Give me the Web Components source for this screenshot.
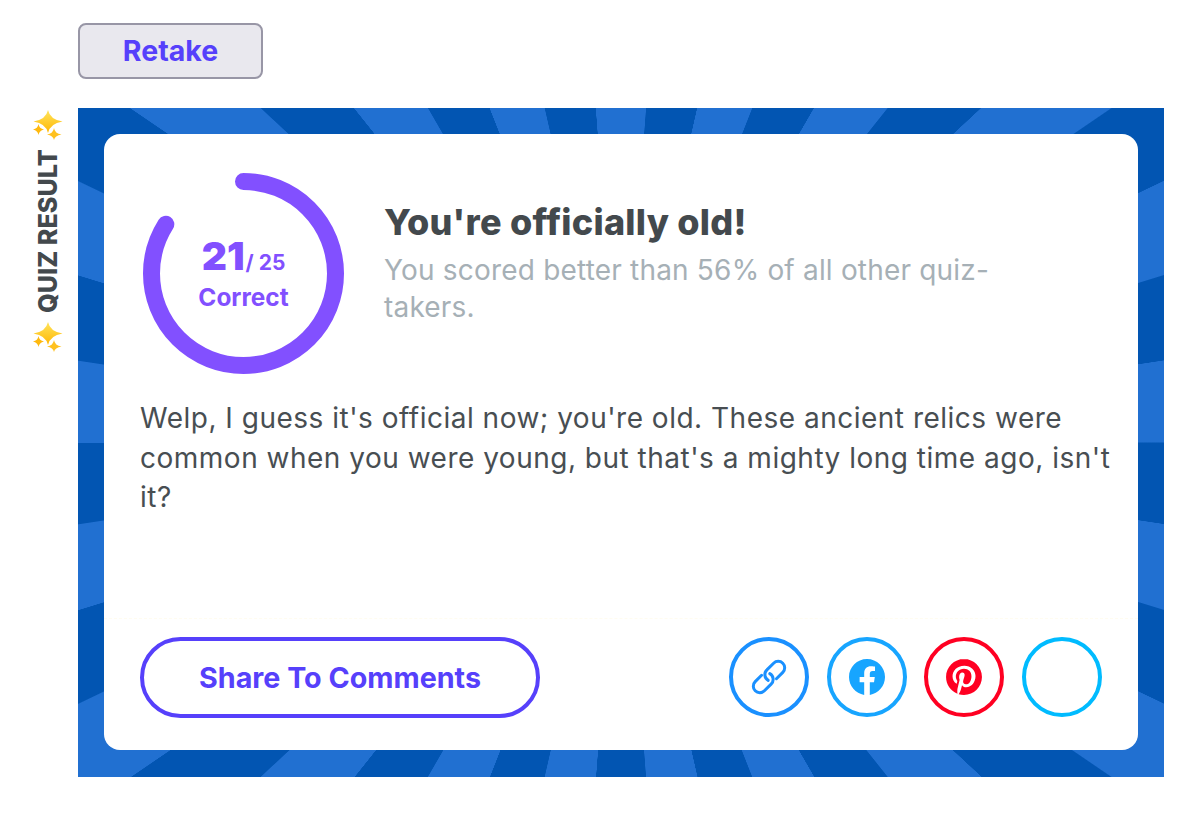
<!DOCTYPE html>
<html lang="en">
<head>
<meta charset="utf-8">
<title>Quiz result</title>
<style>
  html, body { margin: 0; padding: 0; background: #fff; }
  body { font-family: Inter, "Liberation Sans", sans-serif; }
</style>
</head>
<body>
<quiz-page>
  <quiz-button slot="action">Retake</quiz-button>
  <quiz-side slot="side">QUIZ RESULT</quiz-side>
  <quiz-banner slot="banner">
    <quiz-header score="21" total="25" title="You're officially old!" sub="You scored better than 56% of all other quiz-takers."></quiz-header>
    <quiz-body>Welp, I guess it's official now; you're old. These ancient relics were common when you were young, but that's a mighty long time ago, isn't it?</quiz-body>
    <quiz-footer></quiz-footer>
  </quiz-banner>
</quiz-page>
<script>
const FONT = 'Inter, "Liberation Sans", sans-serif';
function def(name, css, html) {
  customElements.define(name, class extends HTMLElement {
    connectedCallback() {
      if (this.shadowRoot) return;
      const r = this.attachShadow({ mode: 'open' });
      const get = a => this.getAttribute(a) || '';
      r.innerHTML = '<style>' + css + '</style>' + (typeof html === 'function' ? html(get) : html);
    }
  });
}
const SPARK = `<svg width="30" height="30" viewBox="0 0 30 30" aria-hidden="true">
  <defs><linearGradient id="g" x1="0" y1="0" x2="0" y2="1"><stop offset="0" stop-color="#ffe45c"/><stop offset="1" stop-color="#ffb703"/></linearGradient></defs>
  <path fill="url(#g)" d="M15 0Q17 9.500 29.500 11.500Q17 13.500 15 23Q13 13.500 .500 11.500Q13 9.500 15 0Z"/>
  <path fill="#ffb90f" d="M5.500 14Q6.200 18.500 11 19.500Q6.200 20.500 5.500 25Q4.800 20.500 0 19.500Q4.800 18.500 5.500 14Z"/>
  <path fill="#ffc11f" d="M21 18Q21.800 23.500 28.500 24.500Q21.800 25.500 21 30Q20.200 25.500 14 24.500Q20.200 23.500 21 18Z"/>
</svg>`;

def('quiz-page', `
  :host { display: grid; grid-template-columns: 78px 1086px; grid-template-rows: auto auto; font-family: ${FONT}; }
  .action { grid-column: 2; padding-top: 23px; padding-bottom: 29px; }
  .side { grid-column: 1; grid-row: 2; }
  .banner { grid-column: 2; grid-row: 2; }
`, `<div class="action"><slot name="action"></slot></div><div class="side"><slot name="side"></slot></div><div class="banner"><slot name="banner"></slot></div>`);

def('quiz-button', `
  :host { display: flex; width: 185px; height: 56px; box-sizing: border-box; align-items: center; justify-content: center; padding-bottom: 2px;
    background: #e9e8ee; border: 2px solid #9896a6; border-radius: 8px; color: #5640fb; font: 700 28.500px ${FONT}; }
`, `<slot></slot>`);

def('quiz-side', `
  :host { display: flex; flex-direction: column; align-items: center; width: 30px; margin: 2px 0 0 33px; gap: 9.500px; }
  .t { writing-mode: vertical-rl; transform: rotate(180deg); font: 800 25.200px/30px ${FONT}; color: #43494d; height: 163px; text-align: center; white-space: nowrap; }
  svg { display: block; }
`, `${SPARK}<div class="t"><slot></slot></div>${SPARK}`);

def('quiz-banner', `
  :host { display: block; box-sizing: border-box; width: 1086px; height: 669px; padding: 26px 26px 27px;
    background: repeating-conic-gradient(from -4.2857deg at 50% 50%, #2170d1 0 8.52deg, #0255b2 8.62deg 17.09deg, #2170d1 17.1428deg); }
  .card { box-sizing: border-box; height: 616px; background: #fff; border-radius: 16px; padding: 39px 36px 32px; display: flex; flex-direction: column; }
  ::slotted(quiz-footer) { margin-top: auto; }
`, `<div class="card"><slot></slot></div>`);

def('quiz-header', `
  :host { display: flex; align-items: center; gap: 40px; padding-left: 3px; color: #43494d; }
  .ring { display: grid; width: 201px; height: 201px; flex: none; }
  .ring > * { grid-area: 1 / 1; }
  .lab { display: flex; flex-direction: column; align-items: center; justify-content: center; color: #8250ff; font-weight: 900; padding-top: 1px; }
  .score { font-size: 39px; line-height: 40px; white-space: nowrap; }
  .score small { font-size: 21px; font-weight: 700; margin-left: 1px; }
  .lbl { font-size: 24.400px; line-height: 30px; font-weight: 700; margin-top: -1px; }
  .txt { flex: 1; min-width: 0; padding-right: 60px; margin-top: -22px; }
  h2 { margin: 0; font: 800 36px/44px ${FONT}; letter-spacing: .25px; color: #43494d; }
  p { margin: 8px 0 0; font: 400 28px/37px ${FONT}; letter-spacing: .19px; color: #a6b0b6; }
`, g => `<div class="ring">
    <svg width="201" height="201" viewBox="0 0 201 201" aria-hidden="true"><circle cx="100.500" cy="100.500" r="92" fill="none" stroke="#8250ff" stroke-width="17" stroke-linecap="round" pathLength="100" stroke-dasharray="84 100" transform="rotate(-90 100.500 100.500)"/></svg>
    <div class="lab"><div class="score">${g('score')}<small>/ ${g('total')}</small></div><div class="lbl">Correct</div></div>
  </div>
  <div class="txt"><h2>${g('title')}</h2><p>${g('sub')}</p></div>`);

def('quiz-body', `
  :host { display: block; margin: 25px -20px 0 0; font: 400 28px/39.500px ${FONT}; letter-spacing: .5px; color: #484e52; }
`, `<slot></slot>`);

def('quiz-footer', `
  :host { display: flex; align-items: flex-start; justify-content: space-between; border-top: 1px dashed #fffcf0; padding: 18px 36px 0; margin: 0 -36px; }
  .share { display: flex; box-sizing: border-box; width: 400px; height: 81px; align-items: center; justify-content: center; border: 4px solid #5640fb; border-radius: 41px; color: #5640fb; font: 700 28.700px ${FONT}; }
  .icons { display: flex; gap: 17.670px; }
  .c { box-sizing: border-box; width: 80px; height: 80px; border-radius: 50%; border: 4px solid currentColor; display: flex; align-items: center; justify-content: center; }
  .c svg { display: block; }
`, `<div class="share">Share To Comments</div>
  <div class="icons">
    <div class="c" style="color:#1a90ff"><svg width="36" height="36" viewBox="-18 -18 36 36" fill="none" stroke="currentColor" stroke-width="3" stroke-linecap="round"><g transform="rotate(-45)"><path d="M4 6.500H13A6.500 6.500 0 0 0 13-6.500H3.500A6.500 6.500 0 0 0-2.900 1.800"/><path transform="rotate(180)" d="M4 6.500H13A6.500 6.500 0 0 0 13-6.500H3.500A6.500 6.500 0 0 0-2.900 1.800"/></g></svg></div>
    <div class="c" style="color:#17a5ff"><svg width="36" height="36" viewBox="0 0 24 24" fill="currentColor"><path d="M24 12.073c0-6.627-5.373-12-12-12s-12 5.373-12 12c0 5.990 4.388 10.954 10.125 11.854v-8.385H7.078v-3.470h3.047V9.430c0-3.007 1.792-4.669 4.533-4.669 1.312 0 2.686.235 2.686.235v2.953H15.830c-1.491 0-1.956.925-1.956 1.874v2.250h3.328l-.532 3.470h-2.796v8.385C19.612 23.027 24 18.062 24 12.073z"/></svg></div>
    <div class="c" style="color:#ff0022"><svg width="36" height="36" viewBox="0 0 24 24" fill="currentColor"><path d="M12.017 0C5.396 0 .029 5.367.029 11.987c0 5.079 3.158 9.417 7.618 11.162-.105-.949-.199-2.403.041-3.439.219-.937 1.406-5.957 1.406-5.957s-.359-.72-.359-1.781c0-1.663.967-2.911 2.168-2.911 1.024 0 1.518.769 1.518 1.688 0 1.029-.653 2.567-.992 3.992-.285 1.193.6 2.165 1.775 2.165 2.128 0 3.768-2.245 3.768-5.487 0-2.861-2.063-4.869-5.008-4.869-3.410 0-5.409 2.562-5.409 5.199 0 1.033.394 2.143.889 2.741.099.120.112.225.085.345-.09.375-.293 1.199-.334 1.363-.053.225-.172.271-.401.165-1.495-.69-2.433-2.878-2.433-4.646 0-3.776 2.748-7.252 7.920-7.252 4.158 0 7.392 2.967 7.392 6.923 0 4.135-2.607 7.462-6.233 7.462-1.214 0-2.354-.629-2.758-1.379l-.749 2.848c-.269 1.045-1.004 2.352-1.498 3.146 1.123.345 2.306.535 3.550.535 6.607 0 11.985-5.365 11.985-11.987C23.970 5.390 18.592.026 11.985.026L12.017 0z"/></svg></div>
    <div class="c" style="color:#00bbff"></div>
  </div>`);
</script>
</body>
</html>
